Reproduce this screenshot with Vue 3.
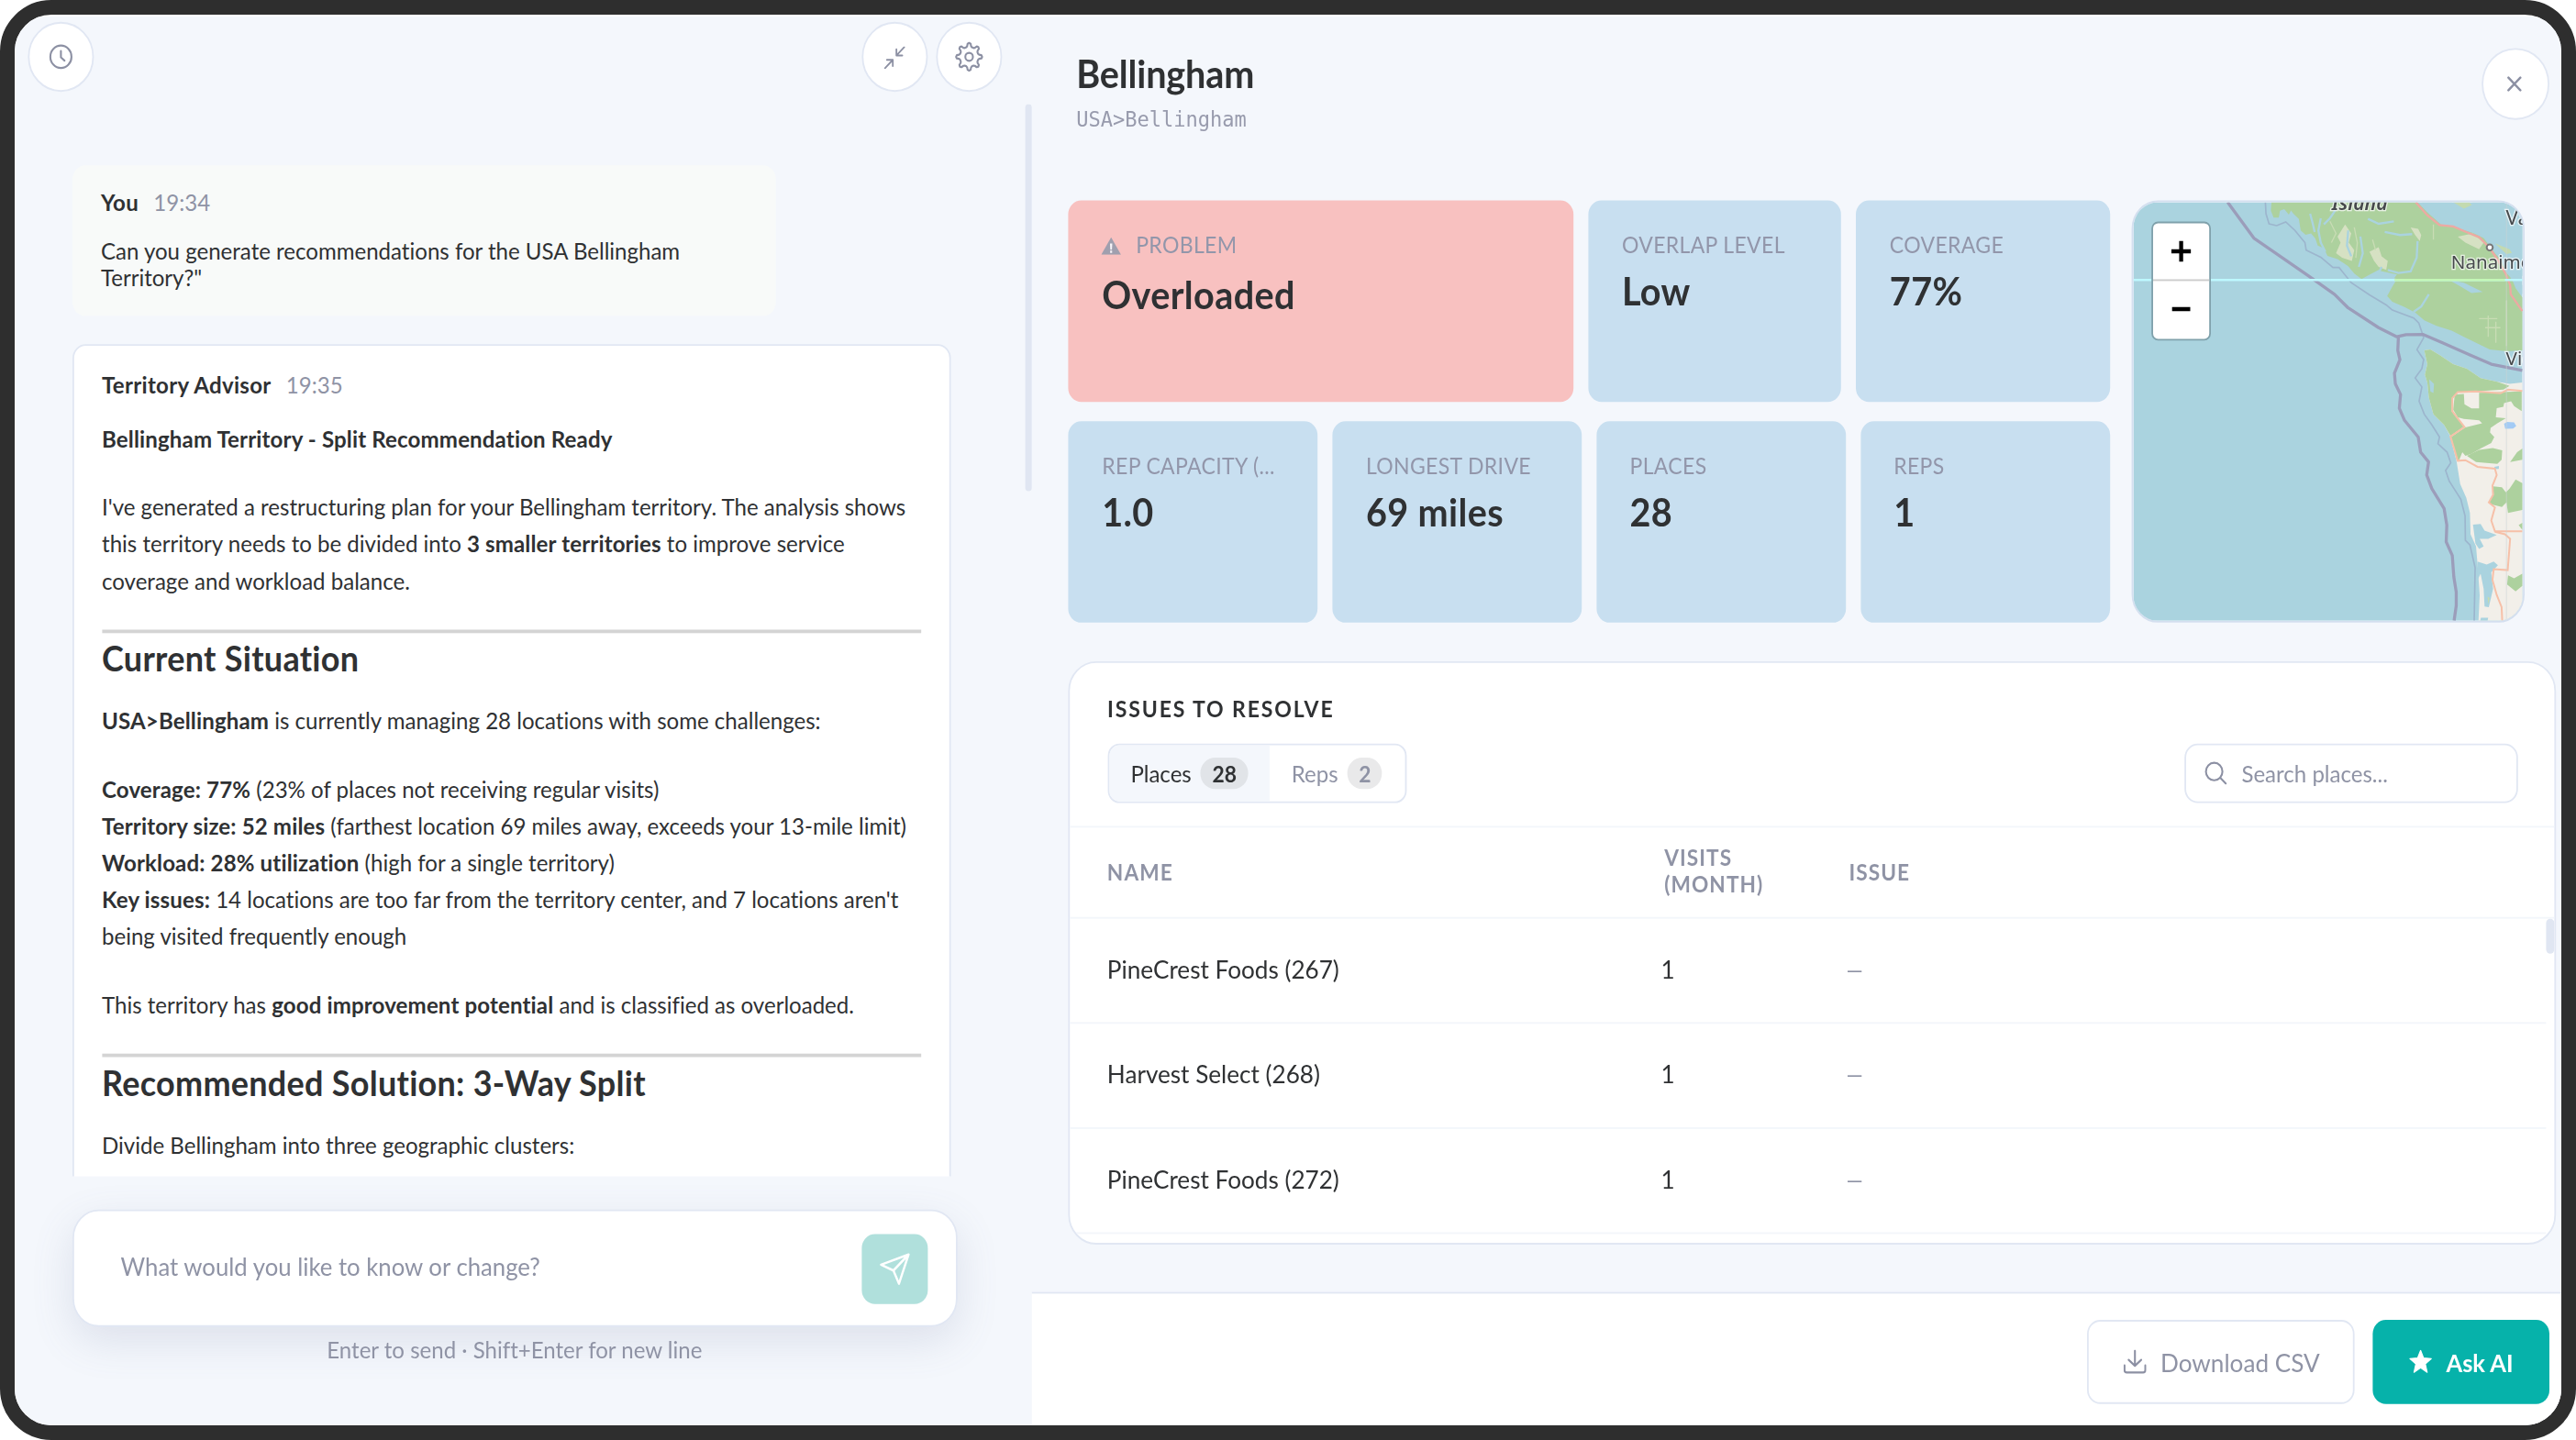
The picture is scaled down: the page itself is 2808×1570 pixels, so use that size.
<script setup>
import { ref } from 'vue'

const activeTab = ref('places')

const topStats = [
  { label: 'OVERLAP LEVEL', value: 'Low' },
  { label: 'COVERAGE', value: '77%' }
]

const bottomStats = [
  { label: 'REP CAPACITY (...', value: '1.0' },
  { label: 'LONGEST DRIVE', value: '69 miles' },
  { label: 'PLACES', value: '28' },
  { label: 'REPS', value: '1' }
]

const tabs = [
  { key: 'places', label: 'Places', count: 28 },
  { key: 'reps', label: 'Reps', count: 2 }
]

const places = [
  { id: 267, name: 'PineCrest Foods (267)', visits: 1 },
  { id: 268, name: 'Harvest Select (268)', visits: 1 },
  { id: 272, name: 'PineCrest Foods (272)', visits: 1 }
]

// outline of the eight-tooth settings gear
const gearPath = (() => {
  const points = []
  for (let i = 0; i < 8; i++) {
    const base = i * 45 - 90
    const shape = [[-17, 5.7], [-11, 6.2], [-7, 7.5], [0, 7.9], [7, 7.5], [11, 6.2], [17, 5.7]]
    shape.forEach(([deg, r]) => {
      const a = ((base + deg) * Math.PI) / 180
      points.push(`${(9 + r * Math.cos(a)).toFixed(2)} ${(9 + r * Math.sin(a)).toFixed(2)}`)
    })
  }
  return `M${points.join('L')}Z`
})()
</script>

<template>
  <div class="frame">
    <div class="screen">
      <section class="chat">
        <header class="chat-header">
          <button class="round-button">
            <svg width="16" height="16" viewBox="0 0 16 16" class="line-icon">
              <circle cx="8" cy="8" r="6.4" />
              <path d="M8 4.7V8.3L10.2 10.2" />
            </svg>
          </button>
          <div class="chat-tools">
            <button class="round-button">
              <svg width="13.6" height="13" viewBox="98 105 76 77" class="line-icon arrows">
                <path d="M171 108L144 135M143 115V136H164M102 179L130 151M109 151H130V172" />
              </svg>
            </button>
            <button class="round-button">
              <svg width="18" height="18" viewBox="0 0 18 18" class="line-icon">
                <path :d="gearPath" />
                <circle cx="9" cy="9" r="2.3" />
              </svg>
            </button>
          </div>
        </header>

        <div class="messages">
          <div class="message-list">
            <article class="message user">
              <div class="message-head"><b>You</b><span class="time">19:34</span></div>
              <p class="user-text">Can you generate recommendations for the USA Bellingham<br />Territory?"</p>
            </article>

            <article class="message advisor">
              <div class="message-head"><b>Territory Advisor</b><span class="time">19:35</span></div>
              <p class="lead"><b>Bellingham Territory - Split Recommendation Ready</b></p>
              <p>
                I've generated a restructuring plan for your Bellingham territory. The analysis shows<br />
                this territory needs to be divided into <b>3 smaller territories</b> to improve service<br />
                coverage and workload balance.
              </p>
              <hr />
              <h2>Current Situation</h2>
              <p class="after-title"><b>USA&gt;Bellingham</b> is currently managing 28 locations with some challenges:</p>
              <p>
                <b>Coverage: 77%</b> (23% of places not receiving regular visits)<br />
                <b>Territory size: 52 miles</b> (farthest location 69 miles away, exceeds your 13-mile limit)<br />
                <b>Workload: 28% utilization</b> (high for a single territory)<br />
                <b>Key issues:</b> 14 locations are too far from the territory center, and 7 locations aren't<br />
                being visited frequently enough
              </p>
              <p>This territory has <b>good improvement potential</b> and is classified as overloaded.</p>
              <hr />
              <h2>Recommended Solution: 3-Way Split</h2>
              <p class="after-title">Divide Bellingham into three geographic clusters:</p>
            </article>
          </div>
          <div class="chat-scrollbar"></div>
        </div>

        <div class="composer">
          <span class="placeholder">What would you like to know or change?</span>
          <button class="send">
            <svg width="20" height="20" viewBox="0 0 24 24" class="line-icon">
              <path d="M22 2L11 13M22 2L15 22L11 13L2 9Z" />
            </svg>
          </button>
        </div>
        <p class="hint">Enter to send · Shift+Enter for new line</p>
      </section>

      <section class="detail">
        <header class="detail-header">
          <div>
            <h1>Bellingham</h1>
            <div class="path">USA&gt;Bellingham</div>
          </div>
          <button class="round-button close">
            <svg width="9.6" height="9" viewBox="0 0 10 10" class="line-icon">
              <path d="M1 1L9 9M9 1L1 9" />
            </svg>
          </button>
        </header>

        <div class="overview">
          <div class="stats">
            <div class="stat-row">
              <div class="stat problem">
                <div class="stat-label">
                  <svg width="12" height="10" viewBox="0 0 12 10" class="warning">
                    <path d="M6 0L12 10H0Z" fill="#a09fae" />
                    <path d="M5.3 3.6H6.7L6.5 7.1H5.5ZM5.4 7.7H6.6V8.9H5.4Z" fill="#f6f3f7" />
                  </svg>
                  PROBLEM
                </div>
                <div class="stat-value">Overloaded</div>
              </div>
              <div v-for="stat in topStats" :key="stat.label" class="stat">
                <div class="stat-label">{{ stat.label }}</div>
                <div class="stat-value">{{ stat.value }}</div>
              </div>
            </div>
            <div class="stat-row bottom">
              <div v-for="stat in bottomStats" :key="stat.label" class="stat">
                <div class="stat-label">{{ stat.label }}</div>
                <div class="stat-value">{{ stat.value }}</div>
              </div>
            </div>
          </div>

          <div class="map">
            <svg class="map-canvas" viewBox="74 57 1278 1377" preserveAspectRatio="none">
              <rect x="74" y="57" width="1278" height="1377" fill="#aad3df" />
              <!-- Vancouver Island -->
              <path
                d="M528 57L526 85L535 108L552 108L556 85L570 80L585 98L592 84L600 95L618 112L624 150L640 164L658 160L672 176L680 200L700 208L712 234L745 244L780 268L800 292L824 310L850 296L880 280L892 302L915 300L940 310L925 335L908 366L925 385L965 402L1000 420L1030 446L1070 464L1120 480L1160 500L1200 520L1245 542L1300 548L1352 545V370L1330 340L1318 310L1296 285L1280 240L1255 215L1225 175L1190 158L1130 140L1085 130L1040 90L1008 57Z"
                fill="#add19e"
              />
              <path
                d="M770 130L790 160L782 190L800 215L792 250L760 240L740 225L755 190L745 170ZM985 140L1010 145L1020 165L1015 185L1000 165ZM850 220L880 205L890 235L910 250L905 280L880 270L865 250ZM1140 170L1190 160L1225 190L1210 212L1165 190Z"
                fill="#e4e6cf"
                opacity=".75"
              />
              <path
                d="M655 95L663 125L670 155M690 110L682 150L690 190L705 220M740 80L720 110L700 130M780 150L776 200L790 235M820 170L828 225L815 270M845 112L880 128L930 120M900 155L950 165L990 162M1008 185L1005 240L985 285L945 290L910 280M870 310L890 270M1045 360L1020 400L995 418"
                fill="none"
                stroke="#aad3df"
                stroke-width="7"
              />
              <path d="M1110 312L1160 322L1222 352L1185 356L1150 335Z" fill="#aad3df" />
              <path d="M940 295L900 350L880 320L850 308L880 282Z" fill="#aad3df" />
              <path
                d="M720 120L740 160L725 190M800 140L810 190L805 240M860 180L870 215M1210 440H1270M1230 470H1280M1240 430V500M1265 450V520M1060 180V130M1300 380V530"
                fill="none"
                stroke="#c8dcb4"
                stroke-width="4"
              />
              <!-- Olympic peninsula -->
              <path
                d="M1030 545L1050 542L1080 560L1125 590L1170 605L1215 636L1270 648L1310 655L1352 650V1434H1208L1212 1350L1205 1250L1200 1190L1182 1150L1180 1080L1168 1030L1148 985L1136 910L1114 825L1095 790L1060 755L1045 700L1040 650L1032 625L1040 590Z"
                fill="#f2efe9"
              />
              <path
                d="M1030 545L1050 542L1080 560L1125 590L1170 605L1215 636L1270 648L1310 662L1290 674L1220 678L1140 682L1122 700L1120 745L1160 795L1116 826L1095 790L1060 755L1045 700L1040 650L1032 625L1040 590Z"
                fill="#add19e"
              />
              <path
                d="M1130 690L1160 688L1162 722L1185 736L1210 736V684L1350 680V745L1325 728L1315 712L1292 718L1290 730L1268 735L1265 765L1298 768L1270 785L1248 800L1246 815L1260 830L1250 850L1215 868L1185 885L1165 892L1155 880L1145 905L1136 905L1118 830L1165 798L1220 785L1210 775L1160 770L1140 765L1125 740Z"
                fill="#add19e"
              />
              <path
                d="M1170 892L1210 872L1255 866L1286 874L1284 905L1270 918L1200 912ZM1352 868L1335 880L1312 912L1352 905ZM1256 992L1285 995L1298 1012L1310 1000L1330 970L1352 982V1070L1305 1080L1300 1045L1285 1060L1252 1052L1242 1045L1258 1020ZM1305 1285L1325 1295L1352 1280V1320L1330 1338L1302 1315ZM1340 1120L1352 1112V1136Z"
                fill="#add19e"
              />
              <path
                d="M1190 1118L1215 1116L1228 1138L1268 1152L1240 1165H1212L1225 1190L1210 1198L1198 1180ZM1205 1240L1235 1250L1258 1240L1272 1252L1250 1275L1256 1330L1242 1390L1228 1388L1225 1330L1215 1280L1205 1300ZM1216 1425L1240 1425L1238 1434H1214ZM1260 928L1275 925V935L1262 936Z"
                fill="#aad3df"
              />
              <path d="M1046 640L1062 655L1060 685L1050 680Z" fill="#aad3df" />
              <path d="M1238 1355L1245 1360L1240 1380Z" fill="#c5dcae" />
              <path d="M1292 786L1302 780L1325 782L1332 794L1322 802L1296 803Z" fill="#a3cbf5" />
              <!-- Strait and small islands -->
              <path d="M1312 305L1352 360V330L1330 300Z" fill="#aad3df" />
              <path d="M1020 57L1065 95L1100 118L1160 132L1200 148L1240 190L1262 225L1285 250L1330 285L1352 300V57L1188 57L1165 80L1120 57Z" fill="#aad3df" />
              <path d="M1125 57L1160 78L1186 66L1178 57ZM1262 192L1310 212L1318 224L1300 228Z" fill="#c3dab0" />
              <!-- Roads -->
              <path
                d="M1002 57L1040 100L1080 132L1125 137L1170 156L1210 172L1245 208L1270 245L1296 290L1312 330L1314 360L1352 415"
                fill="none"
                stroke="#eda9a3"
                stroke-width="7"
              />
              <path
                d="M1352 678L1305 674L1280 686L1200 680L1140 682L1122 702V745L1162 797L1116 828L1140 908L1165 906L1205 928L1262 934L1268 955L1254 990L1256 1020L1242 1045L1262 1062L1250 1105L1262 1140H1352M1262 1142L1295 1150L1312 1165L1304 1268L1258 1265L1254 1300L1268 1350L1284 1390L1286 1434"
                fill="none"
                stroke="#f6c0a8"
                stroke-width="6"
              />
              <!-- Territorial water borders -->
              <path
                d="M508 57L510 95L520 128L545 134L575 122L605 150L638 190L642 215L690 238L730 272L750 272L790 322L850 362L905 395L925 412L995 438L1012 455L1024 490L1028 503L1006 542L1028 575L1022 605L1000 635L1022 665L1013 712L1030 755L1055 790L1080 830L1075 852L1105 880L1117 915L1100 940L1112 975L1150 1035L1164 1090L1165 1170L1180 1185L1197 1260L1194 1434"
                fill="none"
                stroke="#9cb5cd"
                stroke-width="5"
              />
              <path
                d="M384 57L470 175L650 300L735 360L780 405L880 470L940 500L970 493L1025 492L1090 520L1180 560L1250 590L1352 611M945 502L943 545L950 575L932 620L935 655L952 690L948 735L965 775L1010 830L1018 880L1044 912L1038 955L1055 1000L1095 1065L1104 1120L1102 1175L1122 1220L1127 1290L1135 1340V1385L1128 1434"
                fill="none"
                stroke="#9b9dba"
                stroke-width="10"
                stroke-linejoin="round"
              />
              <!-- Tile seams -->
              <path d="M1300 57V1434" stroke="#cfd6d6" stroke-width="3" opacity=".6" />
              <path d="M74 313H1352" stroke="#bdf8ff" stroke-width="7" />
              <path d="M932 313H1295" stroke="#c4f7b6" stroke-width="7" />
              <circle cx="1245" cy="206" r="10" fill="#fff" stroke="#777" stroke-width="6" />
              <g class="map-labels">
                <text x="726" y="82" font-size="64" font-style="italic" font-weight="600">Island</text>
                <text x="1118" y="276" font-size="62">Nanaimo</text>
                <text x="1298" y="132" font-size="68">Va</text>
                <text x="1298" y="594" font-size="62">Vic</text>
              </g>
            </svg>
            <div class="zoom-control">
              <button>
                <svg width="12" height="12" viewBox="0 0 12 12"><path d="M6 0V12M0 6H12" /></svg>
              </button>
              <button>
                <svg width="12" height="12" viewBox="0 0 12 12"><path d="M.5 6H11.5" /></svg>
              </button>
            </div>
          </div>
        </div>

        <div class="issues">
          <div class="issues-title">ISSUES TO RESOLVE</div>
          <div class="issues-bar">
            <div class="tabs">
              <button
                v-for="tab in tabs"
                :key="tab.key"
                class="tab"
                :class="{ active: activeTab === tab.key }"
                @click="activeTab = tab.key"
              >
                {{ tab.label }}<span class="count">{{ tab.count }}</span>
              </button>
            </div>
            <div class="search">
              <svg width="14" height="14" viewBox="0 0 14 14" class="line-icon">
                <circle cx="6" cy="6" r="5" />
                <path d="M9.7 9.6L13 12.8" />
              </svg>
              <span>Search places...</span>
            </div>
          </div>
          <div class="row head">
            <div>NAME</div>
            <div>VISITS<br />(MONTH)</div>
            <div>ISSUE</div>
          </div>
          <div class="rows">
            <div class="row-list">
              <div v-for="place in places" :key="place.id" class="row">
                <div>{{ place.name }}</div>
                <div class="visits">{{ place.visits }}</div>
                <div class="none">—</div>
              </div>
            </div>
            <div class="table-scrollbar"></div>
          </div>
        </div>

        <footer class="actions">
          <button class="download">
            <svg width="14" height="14" viewBox="0 0 14 14" class="line-icon">
              <path d="M7 .6V9M3.2 5.8L7 9.2L10.8 5.8M.7 9V11.6Q.7 13 2.1 13H11.9Q13.3 13 13.3 11.6V9" />
            </svg>
            Download CSV
          </button>
          <button class="ask">
            <svg width="14" height="14" viewBox="0 0 14 14">
              <path
                d="M7 .4L8.8 4.7L13.5 5.1L9.9 8.2L11 12.9L7 10.4L3 12.9L4.1 8.2L.5 5.1L5.2 4.7Z"
                fill="#fff"
                stroke="#fff"
                stroke-width=".6"
                stroke-linejoin="round"
              />
            </svg>
            Ask AI
          </button>
        </footer>
      </section>
    </div>
  </div>
</template>

<style>
body {
  margin: 0;
  background: #fff;
}
</style>

<style scoped>
* {
  box-sizing: border-box;
}

button {
  margin: 0;
  padding: 0;
  border: 0;
  background: none;
  color: inherit;
  font: inherit;
}

svg {
  display: block;
  flex: none;
}

.frame {
  width: 2808px;
  height: 1570px;
  padding-top: 2px;
  border: 16px solid #2e2e2e;
  border-radius: 56px;
  background: #fff;
  overflow: hidden;
}

.screen {
  display: flex;
  width: 1542.3px;
  height: 804.2px;
  transform: scale(1.8, 1.91);
  transform-origin: 0 0;
  background: #f4f7fc;
  color: #2f3133;
  font-family: Lato, "Noto Sans", sans-serif;
  font-size: 13.37px;
  font-variant-ligatures: none;
  white-space: nowrap;
}

.line-icon {
  fill: none;
  stroke: #8c90a3;
  stroke-width: 1.15;
  stroke-linecap: round;
  stroke-linejoin: round;
}

.line-icon.arrows {
  stroke-width: 6;
}

.round-button {
  display: flex;
  align-items: center;
  justify-content: center;
  width: 40px;
  height: 40px;
  border: 1px solid #e1e7f3;
  border-radius: 50%;
  background: #fff;
}

/* chat */
.chat {
  display: flex;
  flex-direction: column;
  flex: none;
  width: 616.2px;
}

.chat-header {
  display: flex;
  justify-content: space-between;
  flex: none;
  height: 49.5px;
  padding: 3.1px 18.4px 0 7.8px;
}

.chat-tools {
  display: flex;
  gap: 4.8px;
}

.messages {
  display: flex;
  justify-content: space-between;
  flex: none;
  height: 612.8px;
  overflow: hidden;
}

.message-list {
  width: 566.6px;
  padding: 35.3px 0 0 34.7px;
}

.message {
  padding: 13.2px 17.1px 0;
  border-radius: 8px;
}

.user {
  width: 426.2px;
  height: 85.9px;
  margin-bottom: 16.7px;
  padding-left: 17.5px;
  background: #f8faf9;
}

.advisor {
  height: 600px;
  padding-top: 13.4px;
  border: 1px solid #e1e7f3;
  background: #fff;
}

.message-head {
  display: flex;
  gap: 9px;
  line-height: 16px;
}

.message-head b {
  letter-spacing: .17px;
}

.time {
  color: #8f93a5;
}

b {
  font-weight: 700;
  letter-spacing: .08px;
}

p {
  margin: 17.8px 0 0;
  line-height: 21px;
}

.user-text {
  margin-top: 12.9px;
  line-height: 15.6px;
}

.lead {
  margin: 13.3px 0 -.2px;
}

hr {
  height: 2px;
  margin: 16.9px 0 2.2px;
  border: 0;
  background: #d4d4d4;
}

h2 {
  margin: 0;
  font-size: 20px;
  font-weight: 700;
  letter-spacing: .15px;
  line-height: 24px;
}

.after-title {
  margin-top: 14.5px;
}

.chat-scrollbar {
  width: 4.6px;
  height: 221.5px;
  border-radius: 3px;
  background: #e0e6f2;
}

.composer {
  display: flex;
  align-items: center;
  justify-content: space-between;
  flex: none;
  width: 536.1px;
  height: 66.5px;
  margin: 19.1px 0 0 34.7px;
  padding: 0 17.2px 0 28.5px;
  border: 1px solid #e1e7f3;
  border-radius: 16px;
  background: #fff;
  box-shadow: 0 8px 24px rgba(100, 110, 150, .16);
}

.placeholder {
  margin-top: -2px;
  color: #8f93a5;
  font-size: 14.3px;
}

.send {
  display: flex;
  align-items: center;
  justify-content: center;
  width: 40px;
  height: 40px;
  border-radius: 8px;
  background: #b0e0dc;
}

.send .line-icon {
  stroke: #fff;
  stroke-width: 1.6;
}

.hint {
  width: 535.6px;
  margin: 4.7px 0 0 34.9px;
  line-height: 16px;
  text-align: center;
  color: #8f93a5;
}

/* detail */
.detail {
  display: flex;
  flex-direction: column;
  flex: 1;
  min-width: 0;
}

.detail-header {
  display: flex;
  justify-content: space-between;
  flex: none;
  height: 104.9px;
  padding: 18.4px 7.8px 0 26.7px;
}

.close {
  width: 40.6px;
  height: 40.4px;
}

.close .line-icon {
  stroke-width: 1.5;
}

h1 {
  margin: 1.8px 0 0;
  font-size: 22px;
  font-weight: 700;
  letter-spacing: -.08px;
  line-height: 26px;
}

.path {
  margin-top: 4.7px;
  color: #989bad;
  font-family: "DejaVu Sans Mono", monospace;
  font-size: 12.24px;
  line-height: 16px;
}

.overview {
  display: flex;
  gap: 13.5px;
  flex: none;
  height: 241.2px;
  margin-left: 22.3px;
}

.stats {
  display: flex;
  flex-direction: column;
  gap: 10.8px;
  width: 630.2px;
}

.stat-row {
  display: grid;
  grid-template-columns: 305.8px 1fr 1fr;
  gap: 9px;
  height: 115.2px;
}

.stat-row.bottom {
  grid-template-columns: repeat(4, 1fr);
}

.stat {
  min-width: 0;
  padding: 16.9px 20px 0;
  border-radius: 8px;
  background: #c8dff0;
}

.problem {
  background: #f8c1c0;
}

.stat-label {
  color: #9296aa;
  font-size: 12.8px;
  letter-spacing: .18px;
  line-height: 16px;
}

.problem .stat-label {
  display: flex;
  align-items: center;
  gap: 8.5px;
}

.warning {
  margin-top: 1.6px;
}

.stat-value {
  margin-top: 6.6px;
  font-size: 22px;
  font-weight: 700;
  letter-spacing: .2px;
  line-height: 26px;
}

.problem .stat-value {
  margin-top: 7.8px;
}

.map {
  position: relative;
  width: 237.6px;
  height: 240.8px;
  border: .5px solid #d4dfef;
  border-radius: 16px;
  overflow: hidden;
}

.map-canvas {
  width: 100%;
  height: 100%;
}

.map-labels {
  fill: #46494c;
  stroke: rgba(255, 255, 255, .7);
  stroke-width: 8;
  paint-order: stroke;
  font-family: "Noto Sans", sans-serif;
}

.zoom-control {
  position: absolute;
  top: 10.7px;
  left: 11px;
  width: 36.2px;
  border: 1px solid #7fa1ab;
  border-radius: 4px;
  background: #fff;
}

.zoom-control button {
  display: flex;
  align-items: center;
  justify-content: center;
  width: 100%;
  height: 33.2px;
}

.zoom-control button:first-child {
  border-bottom: 1px solid #ccc;
}

.zoom-control path {
  stroke: #000;
  stroke-width: 2.4;
}

.issues {
  flex: none;
  width: 900.4px;
  height: 333.4px;
  margin: 21.9px 0 0 22.3px;
  border: 1px solid #e1e7f3;
  border-radius: 17px;
  background: #fff;
  overflow: hidden;
}

.issues-title {
  margin: 18.2px 0 0 22.2px;
  font-size: 12.8px;
  font-weight: 700;
  letter-spacing: 1.03px;
  line-height: 16px;
}

.issues-bar {
  display: flex;
  justify-content: space-between;
  height: 59.9px;
  padding: 12px 21.8px 0 22.1px;
  border-bottom: 1px solid #f3f6fb;
}

.tabs {
  display: flex;
  height: 33.5px;
  border: 1px solid #e1e7f3;
  border-radius: 7px;
  overflow: hidden;
}

.tab {
  display: flex;
  align-items: center;
  gap: 5.7px;
  padding: 0 13.2px;
  color: #8f93a5;
}

.tab:last-child {
  padding-right: 14px;
}

.tab.active {
  background: #f4f7fc;
  color: #2f3133;
}

.count {
  padding: 0 6.9px;
  border-radius: 10px;
  background: #e9e9ea;
  font-size: 12.7px;
  font-weight: 700;
  line-height: 18.6px;
}

.active .count {
  background: #e1e4e8;
}

.search {
  display: flex;
  align-items: center;
  gap: 8.8px;
  width: 201.9px;
  height: 33.5px;
  padding-left: 10.6px;
  border: 1px solid #e1e7f3;
  border-radius: 8px;
  color: #8f93a5;
}

.row {
  display: grid;
  grid-template-columns: 337.4px 111.8px 1fr;
  align-items: center;
  height: 60.05px;
  padding: 0 0 2.6px 22.1px;
  border-bottom: 1px solid #f3f6fb;
  font-size: 14.52px;
}

.row.head {
  height: 51.8px;
  padding: 1.6px 0 0 22.1px;
  color: #8f93a5;
  font-size: 12.6px;
  font-weight: 700;
  letter-spacing: .6px;
  line-height: 14.8px;
}

.rows {
  display: flex;
}

.row-list {
  flex: 1;
}

.visits {
  margin-left: -2px;
}

.none {
  margin: 2px 0 0 -1.6px;
  color: #8f93a5;
  font-size: 12.8px;
}

.table-scrollbar {
  width: 4.5px;
  height: 20.6px;
  border-radius: 3px;
  background: #e0e6f2;
}

.actions {
  display: flex;
  justify-content: flex-end;
  gap: 10.7px;
  height: 76.6px;
  margin-top: auto;
  padding: 15.8px 7.4px 0 0;
  border-top: 1px solid #e1e7f3;
  background: #fff;
  font-size: 14.52px;
}

.download,
.ask {
  display: flex;
  align-items: center;
  justify-content: center;
  gap: 8.8px;
  height: 47.8px;
  border-radius: 8px;
}

.download {
  width: 161.8px;
  border: 1px solid #e1e7f3;
  color: #8f93a5;
}

.ask {
  width: 107px;
  background: #06b2aa;
  color: #fff;
  font-size: 14.2px;
  font-weight: 700;
}
</style>
